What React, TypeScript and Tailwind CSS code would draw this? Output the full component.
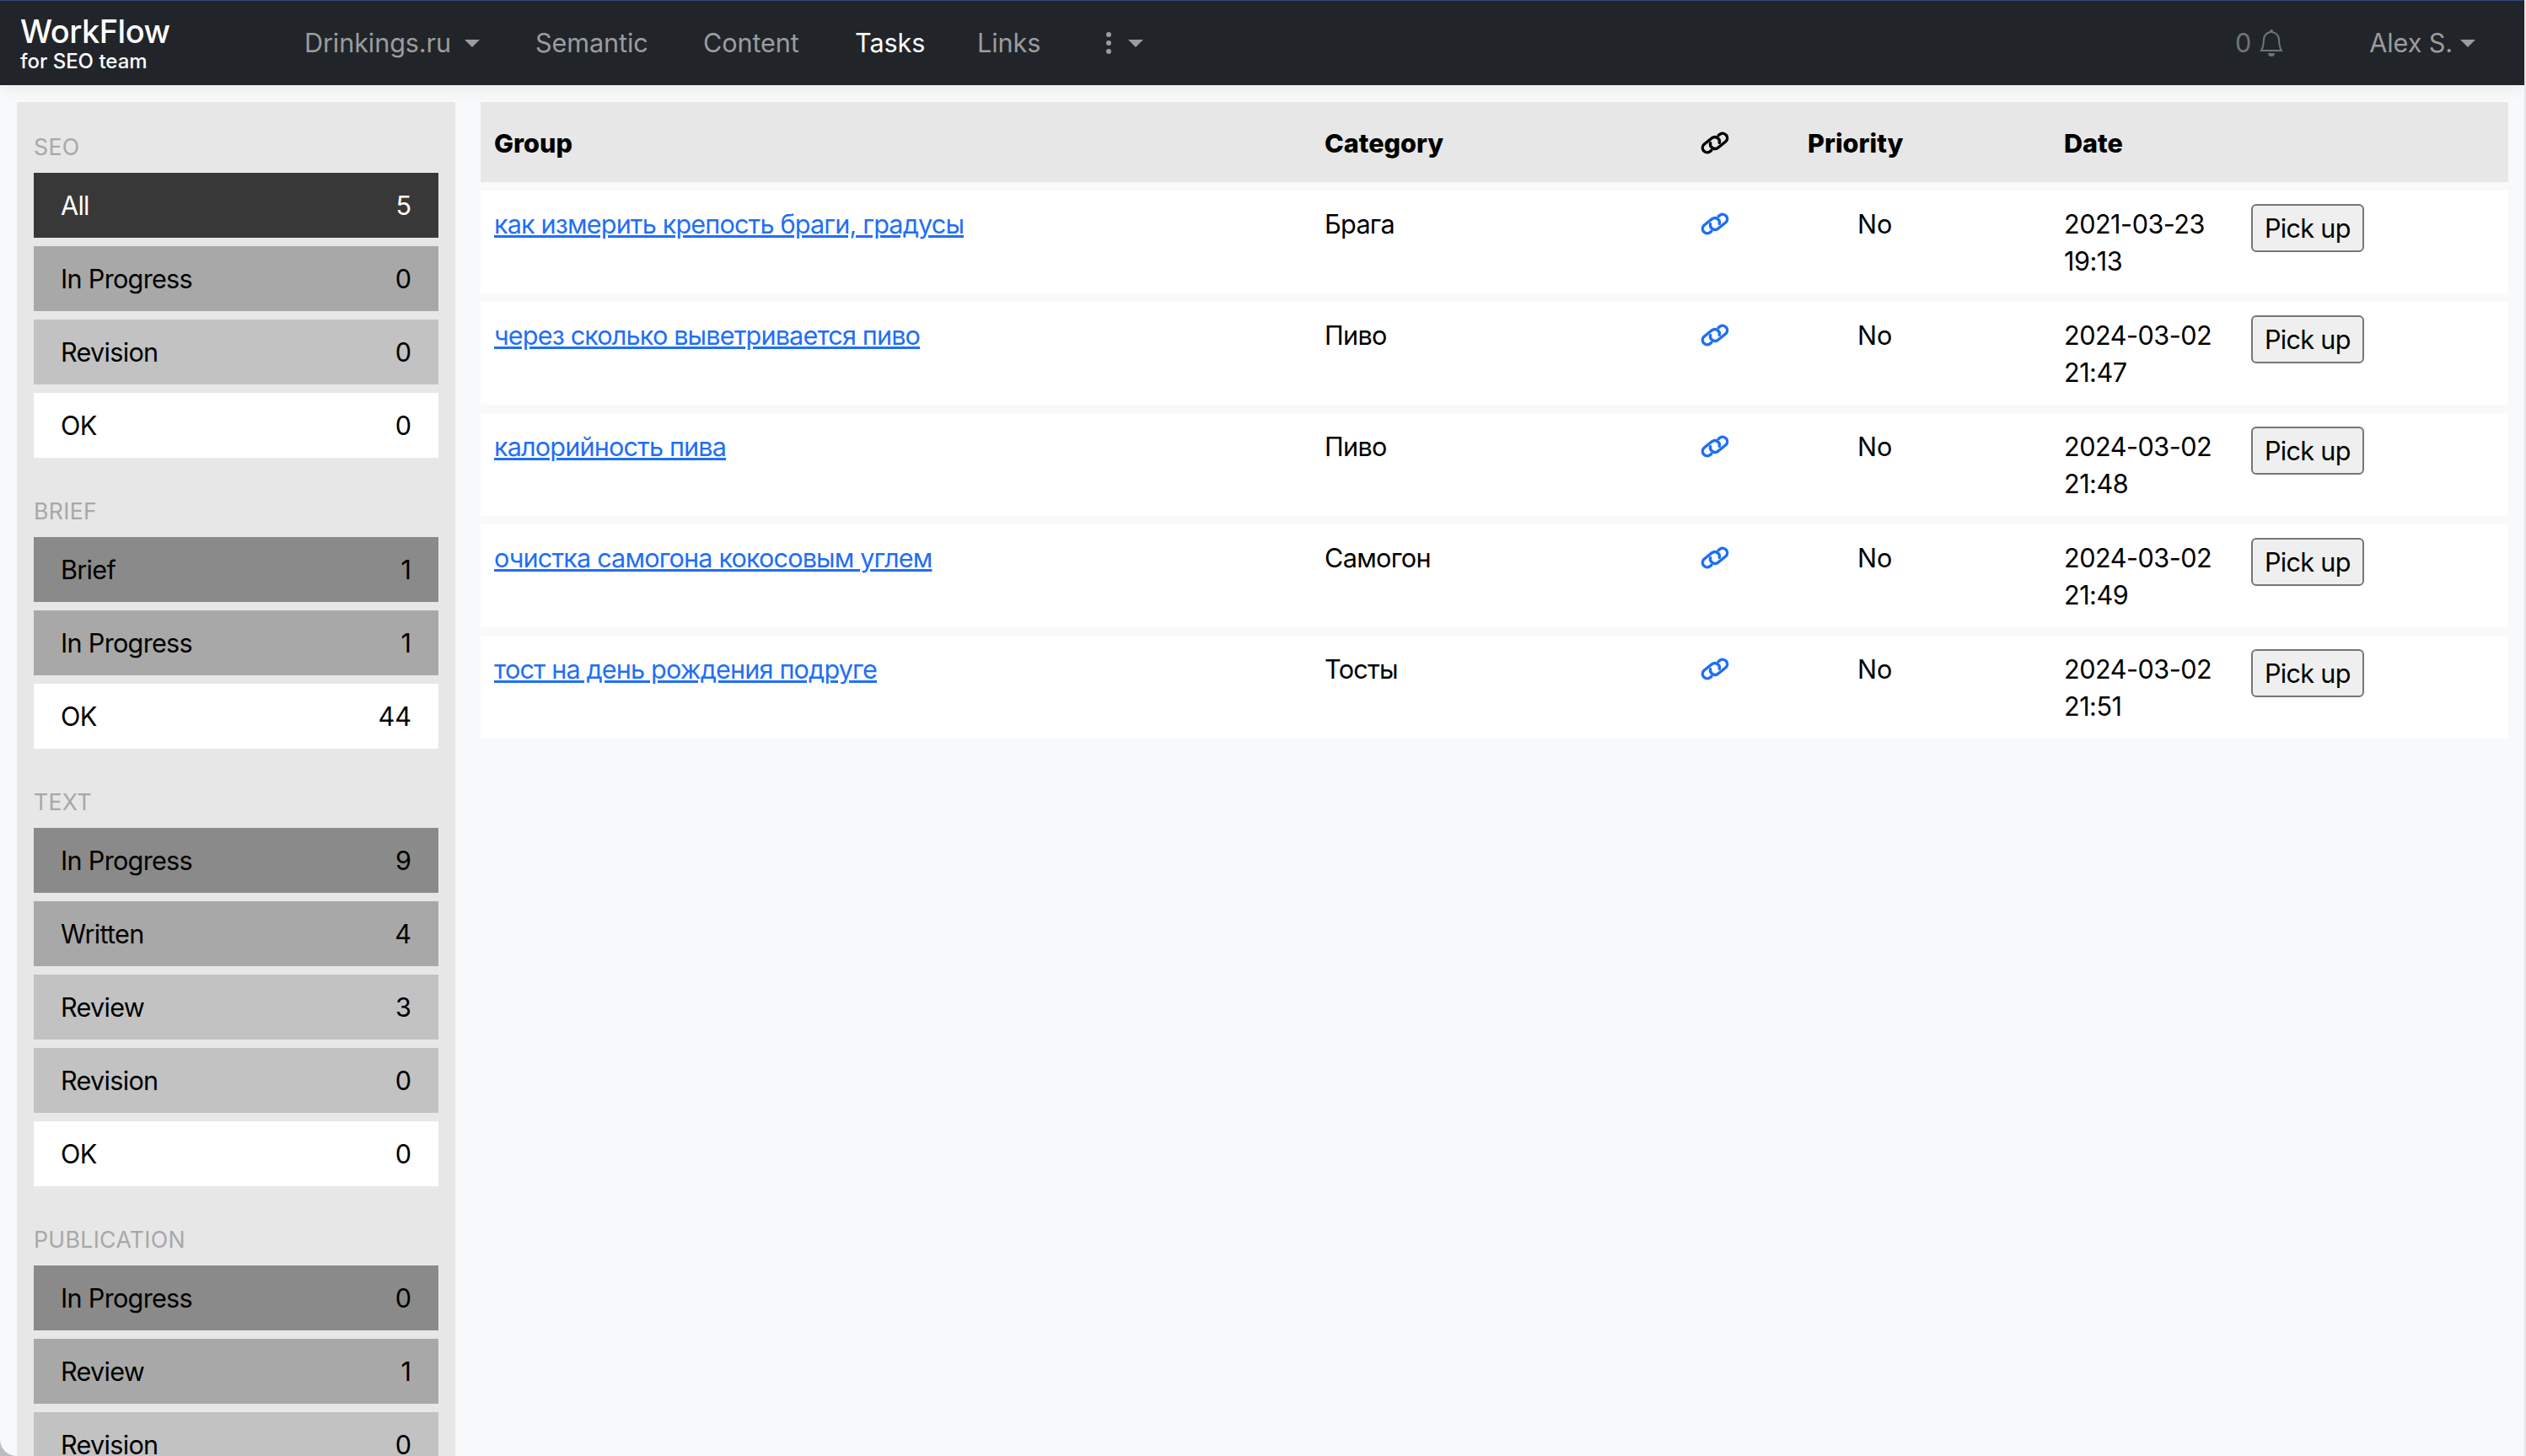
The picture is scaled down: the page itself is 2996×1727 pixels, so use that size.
import { BsBell } from 'react-icons/bs'

const sections = [
  {
    title: 'SEO',
    items: [
      { label: 'All', count: 5, tone: 'bg-[#383838] text-white' },
      { label: 'In Progress', count: 0, tone: 'bg-[#a8a8a8] text-black' },
      { label: 'Revision', count: 0, tone: 'bg-[#c2c2c2] text-black' },
      { label: 'OK', count: 0, tone: 'bg-white text-black' },
    ],
  },
  {
    title: 'Brief',
    items: [
      { label: 'Brief', count: 1, tone: 'bg-[#8a8a8a] text-black' },
      { label: 'In Progress', count: 1, tone: 'bg-[#a8a8a8] text-black' },
      { label: 'OK', count: 44, tone: 'bg-white text-black' },
    ],
  },
  {
    title: 'Text',
    items: [
      { label: 'In Progress', count: 9, tone: 'bg-[#8a8a8a] text-black' },
      { label: 'Written', count: 4, tone: 'bg-[#a8a8a8] text-black' },
      { label: 'Review', count: 3, tone: 'bg-[#c2c2c2] text-black' },
      { label: 'Revision', count: 0, tone: 'bg-[#c2c2c2] text-black' },
      { label: 'OK', count: 0, tone: 'bg-white text-black' },
    ],
  },
  {
    title: 'Publication',
    items: [
      { label: 'In Progress', count: 0, tone: 'bg-[#8a8a8a] text-black' },
      { label: 'Review', count: 1, tone: 'bg-[#a8a8a8] text-black' },
      { label: 'Revision', count: 0, tone: 'bg-[#c2c2c2] text-black' },
    ],
  },
]

const tasks = [
  { group: 'как измерить крепость браги, градусы', category: 'Брага', date: '2021-03-23 19:13' },
  { group: 'через сколько выветривается пиво', category: 'Пиво', date: '2024-03-02 21:47' },
  { group: 'калорийность пива', category: 'Пиво', date: '2024-03-02 21:48' },
  { group: 'очистка самогона кокосовым углем', category: 'Самогон', date: '2024-03-02 21:49' },
  { group: 'тост на день рождения подруге', category: 'Тосты', date: '2024-03-02 21:51' },
]

const columns = 'grid grid-cols-[985px_445px_128px_304px_222px_1fr]'

function Caret() {
  return <span className="inline-block w-0 h-0 border-x-[9px] border-x-transparent border-t-[9px] border-t-current" />
}

function ChainIcon({ className }: { className: string }) {
  return (
    <svg viewBox="0 0 36 27" fill="none" stroke="currentColor" strokeWidth="3.4" strokeLinecap="round" className={className}>
      <path d="M13.8 22.3 L11.9 23.8 A5.5 5.5 0 0 1 5.1 15.2 L14.6 7.7 A5.5 5.5 0 0 1 23.3 13.3" />
      <path d="M22.2 4.7 L24.1 3.2 A5.5 5.5 0 0 1 30.9 11.8 L21.4 19.3 A5.5 5.5 0 0 1 12.7 13.7" />
    </svg>
  )
}

function Navbar() {
  return (
    <header className="relative z-10 flex h-[101px] items-center border-t border-t-[#2f4a75] bg-[#212529] shadow-[0_6px_16px_rgba(0,0,0,0.05)] text-[#9b9c9e]">
      <div className="ml-[24px] w-[337px] text-white">
        <div className="text-[38px] leading-[42px] font-medium tracking-[-0.5px]">WorkFlow</div>
        <div className="mt-[2px] text-[24px] leading-[26px] font-medium">for SEO team</div>
      </div>
      <nav className="flex items-center text-[30.6px] leading-[46px] tracking-[-0.1px]">
        <a className="flex w-[274px] items-center">
          Drinkings.ru
          <span className="ml-[16px] flex"><Caret /></span>
        </a>
        <a className="w-[199px]">Semantic</a>
        <a className="w-[180px]">Content</a>
        <a className="w-[145px] text-white">Tasks</a>
        <a className="w-[153px]">Links</a>
        <a className="flex items-center">
          <span className="flex flex-col gap-[4px]">
            <span className="h-[6px] w-[6px] rounded-full bg-current" />
            <span className="h-[6px] w-[6px] rounded-full bg-current" />
            <span className="h-[6px] w-[6px] rounded-full bg-current" />
          </span>
          <span className="ml-[20px] flex"><Caret /></span>
        </a>
      </nav>
      <div className="ml-auto flex items-center text-[30.6px] leading-[46px]">
        <span className="flex items-center text-[#6c757d]">
          0
          <BsBell className="ml-[8px] h-[32px] w-[32px]" />
        </span>
        <a className="ml-[100px] mr-[58px] flex items-center tracking-[-0.1px]">
          Alex S.
          <span className="ml-[9px] flex"><Caret /></span>
        </a>
      </div>
    </header>
  )
}

function Sidebar() {
  return (
    <aside className="w-[520px] shrink-0 bg-[#e7e7e7] px-[20px] pt-[33px]">
      {sections.map((section, i) => (
        <section key={section.title} className={i > 0 ? 'mt-[43px]' : ''}>
          <div className="mb-[11px] h-[40px] text-[26.7px] leading-[40px] tracking-[0.3px] uppercase text-[#a8a8a8]">{section.title}</div>
          <div className="flex flex-col gap-[10px]">
            {section.items.map(item => (
              <div key={item.label} className={`flex h-[77px] shrink-0 items-center justify-between px-[32px] pt-[1px] text-[30.6px] ${item.tone}`}>
                <span className="tracking-[-0.7px]">{item.label}</span>
                <span>{item.count}</span>
              </div>
            ))}
          </div>
        </section>
      ))}
    </aside>
  )
}

function TaskTable() {
  return (
    <main className="flex-1 mr-[19px] ml-[30px] flex flex-col gap-[10px]">
      <div className={`${columns} h-[95px] items-center bg-[#e7e7e7] pt-[2px] font-extrabold text-black`}>
        <div className="pl-[16px]">Group</div>
        <div className="pl-[16px]">Category</div>
        <div className="pl-[16px]"><ChainIcon className="h-[27px] w-[36px]" /></div>
        <div className="pl-[16px]">Priority</div>
        <div className="pl-[16px]">Date</div>
        <div />
      </div>
      {tasks.map(task => (
        <div key={task.group} className={`${columns} h-[122px] bg-white pt-[18px] leading-[44px] text-black`}>
          <div className="pl-[16px]">
            <a className="text-[#1f6ff5] underline tracking-[-0.85px]">{task.group}</a>
          </div>
          <div className="pl-[16px] tracking-[-0.7px]">{task.category}</div>
          <div className="pl-[16px] pt-[8px]"><ChainIcon className="h-[27px] w-[36px] text-[#1f6ff5]" /></div>
          <div className="pl-[75px]">No</div>
          <div className="pl-[16px] pr-[16px] tracking-[-0.5px]">{task.date}</div>
          <div className="pl-[16px] -mt-[2px]">
            <button className="h-[57px] rounded-[6px] border-2 border-[#767676] bg-[#efefef] px-[14px] text-[30.6px] leading-[40px] tracking-[-0.7px]">Pick up</button>
          </div>
        </div>
      ))}
    </main>
  )
}

export default function App() {
  return (
    <div className="h-[1727px] overflow-hidden bg-[#bdbdbd] font-['Inter',sans-serif] text-[30.6px]">
      <div className="flex h-full flex-col overflow-hidden rounded-bl-[20px] border-r-2 border-r-[#e6e6e6] bg-[#f8f9fa]">
        <Navbar />
        <div className="flex flex-1 pt-[20px] pl-[20px] overflow-hidden">
          <Sidebar />
          <TaskTable />
        </div>
      </div>
    </div>
  )
}
